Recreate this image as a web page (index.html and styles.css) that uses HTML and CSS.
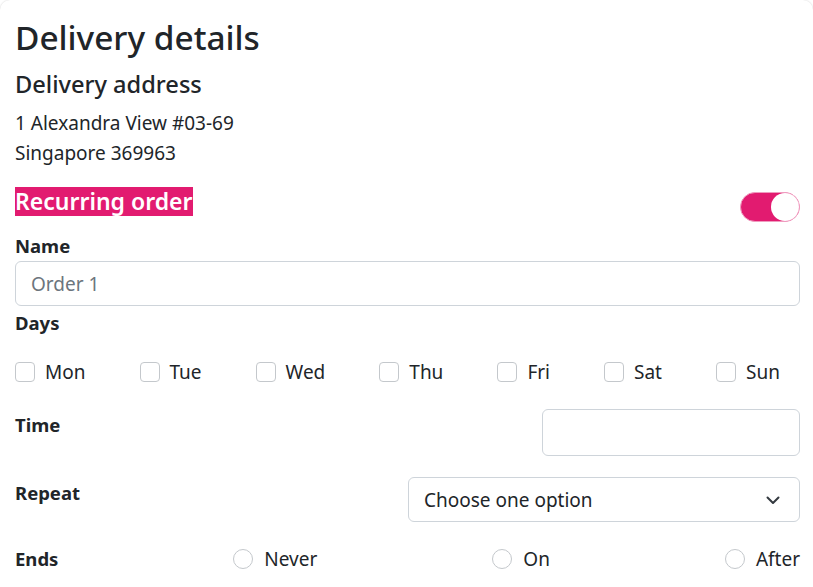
FILE: index.html
```html
<!DOCTYPE html>
<html lang="en">
<head>
<meta charset="utf-8">
<title>Delivery details</title>
<link rel="stylesheet" href="styles.css">
</head>
<body>
<div class="card">
  <h1 class="title">Delivery details</h1>
  <h2 class="subtitle">Delivery address</h2>
  <p class="address">1 Alexandra View #03-69<br>Singapore 369963</p>

  <div class="recurring-row">
    <span class="recurring">Recurring order</span>
    <span class="switch" role="switch" aria-checked="true"><span class="knob"></span></span>
  </div>

  <div class="label label-name">Name</div>
  <div class="input name-input"><span class="placeholder">Order 1</span></div>

  <div class="label label-days">Days</div>
  <div class="days">
    <label class="check"><span class="box"></span>Mon</label>
    <label class="check"><span class="box"></span>Tue</label>
    <label class="check"><span class="box"></span>Wed</label>
    <label class="check"><span class="box"></span>Thu</label>
    <label class="check"><span class="box"></span>Fri</label>
    <label class="check"><span class="box"></span>Sat</label>
    <label class="check"><span class="box"></span>Sun</label>
  </div>

  <div class="field-row row-time">
    <div class="label row-label">Time</div>
    <div class="input time-input"></div>
  </div>

  <div class="field-row row-repeat">
    <div class="label row-label">Repeat</div>
    <div class="input select">
      <span>Choose one option</span>
      <svg class="chev" width="16" height="12" viewBox="0 0 16 12"><path d="M2.5 3.5 8 9l5.5-5.5" fill="none" stroke="#343a40" stroke-width="2" stroke-linecap="round" stroke-linejoin="round"/></svg>
    </div>
  </div>

  <div class="ends-row">
    <div class="label">Ends</div>
    <label class="check"><span class="radio"></span>Never</label>
    <label class="check"><span class="radio"></span>On</label>
    <label class="check"><span class="radio"></span>After</label>
  </div>
</div>
</body>
</html>
```

FILE: styles.css
```css
html, body {
  margin: 0;
  padding: 0;
  background: #ffffff;
}
body {
  font-family: "Noto Sans", "Open Sans", sans-serif;
  color: #212529;
}
.card {
  box-sizing: border-box;
  width: 813px;
  min-height: 600px;
  background: #fff;
  border-radius: 10px;
  box-shadow: 0 0 2px rgba(0, 0, 0, 0.18);
  padding: 17px 13px 0 15px;
}
.title {
  margin: 0;
  font-size: 33.4px;
  line-height: 40px;
  font-weight: 500;
}
.subtitle {
  margin: 12px 0 0;
  font-size: 23.6px;
  line-height: 30px;
  font-weight: 500;
}
.address {
  margin: 9px 0 0;
  font-size: 19px;
  line-height: 30px;
}
.recurring-row {
  margin-top: 19px;
  display: flex;
  justify-content: space-between;
  align-items: flex-start;
}
.recurring {
  display: inline-block;
  background: #e21b70;
  color: #fff;
  font-size: 23px;
  line-height: 29px;
  font-weight: 600;
}
.switch {
  margin-top: 5px;
  box-sizing: border-box;
  width: 60px;
  height: 30px;
  border-radius: 15px;
  background: #e21b70;
  border: 1px solid #ef9cbf;
  display: flex;
  justify-content: flex-end;
  align-items: center;
}
.knob {
  width: 28px;
  height: 28px;
  border-radius: 50%;
  background: #fff;
}
.label {
  font-size: 18.5px;
  line-height: 24px;
  font-weight: 700;
}
.label-name {
  margin-top: 12px;
}
.input {
  box-sizing: border-box;
  border: 1px solid #ced4da;
  border-radius: 6px;
  background: #fff;
  font-size: 19px;
}
.name-input {
  margin-top: 3px;
  height: 45px;
  padding: 0 15px;
  display: flex;
  align-items: center;
}
.placeholder {
  color: #6c757d;
}
.label-days {
  margin-top: 5px;
}
.days {
  margin-top: 25px;
  padding-right: 20px;
  display: flex;
  justify-content: space-between;
}
.check {
  display: flex;
  align-items: center;
  font-size: 19px;
  line-height: 24px;
}
.box {
  box-sizing: border-box;
  width: 20px;
  height: 20px;
  border: 1px solid #c4c8cc;
  border-radius: 4px;
  margin-right: 10px;
  background: #fff;
}
.radio {
  box-sizing: border-box;
  width: 20px;
  height: 20px;
  border: 1px solid #c4c8cc;
  border-radius: 50%;
  margin-right: 11px;
  background: #fff;
}
.field-row {
  display: flex;
  justify-content: space-between;
  align-items: flex-start;
}
.row-label {
  padding-top: 4px;
}
.row-time {
  margin-top: 25px;
}
.time-input {
  width: 258px;
  height: 47px;
}
.row-repeat {
  margin-top: 21px;
}
.select {
  width: 392px;
  height: 45px;
  padding: 0 18px 0 15px;
  display: flex;
  align-items: center;
  justify-content: space-between;
}
.chev {
  display: block;
}
.ends-row {
  margin-top: 25px;
  display: flex;
  justify-content: space-between;
  align-items: center;
}
```
